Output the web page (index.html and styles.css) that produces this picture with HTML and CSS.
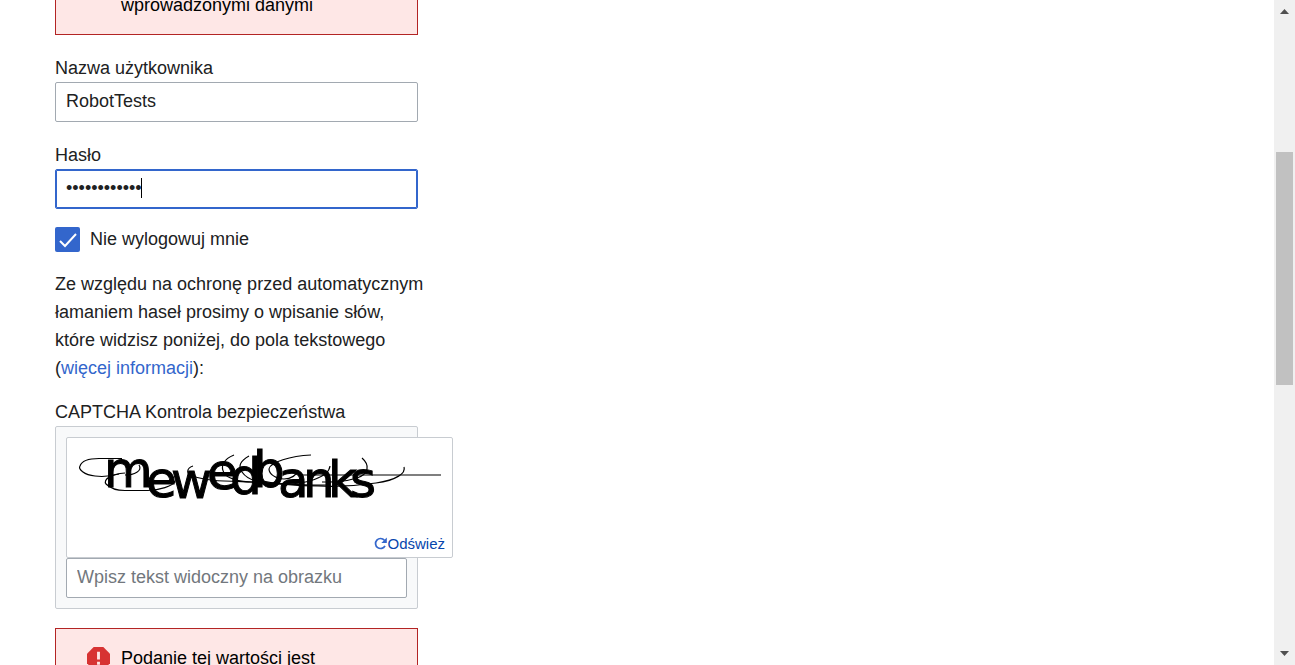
FILE: index.html
```
<!DOCTYPE html>
<html lang="pl">
<head>
<meta charset="utf-8">
<meta name="viewport" content="width=device-width, initial-scale=1">
<title>Zaloguj się</title>
<link rel="stylesheet" href="styles.css">
</head>
<body>
<div class="page">
  <main class="content">
    <form class="login">
      <div class="alert alert-top"><p class="alert-text">wprowadzonymi danymi</p></div>

      <div class="field">
        <label class="label" for="username">Nazwa użytkownika</label>
        <input class="input" id="username" type="text" value="RobotTests">
      </div>

      <div class="field">
        <label class="label" for="password">Hasło</label>
        <div class="password-wrap">
          <input class="input input-active" id="password" type="password" value="robottests12">
          <span class="caret"></span>
        </div>
      </div>

      <div class="remember">
        <input class="checkbox" id="remember" type="checkbox" checked>
        <label class="remember-label" for="remember">Nie wylogowuj mnie</label>
      </div>

      <p class="notice">Ze względu na ochronę przed automatycznym łamaniem haseł prosimy o wpisanie słów, które widzisz poniżej, do pola tekstowego (<a class="link" href="#">więcej informacji</a>):</p>

      <div class="captcha-field">
        <label class="label" for="captcha">CAPTCHA Kontrola bezpieczeństwa</label>
        <div class="captcha">
          <div class="captcha-image">
            <svg class="captcha-picture" viewBox="67 438 385 95" role="img" aria-label="CAPTCHA">
              <text class="captcha-word" x="104 146 171 207 230 253 278 303 328 350" y="487 497 498 489 494 487 497 497 497 497">mewedbanks</text>
              <g class="captcha-lines">
                <path d="M139 465C143 471 134 475 125 475M119 474C108 477 102 477 95 476C84 475 78 469 80 466C82 460 92 458.500 99 458.500H122"/>
                <path d="M125 473C110 474 103 480 106 484C110 488 118 490.500 125 490.500H148C160 490 172 486 175 482L172 479"/>
                <path d="M193 466C187 468 185 474 193 476C206 481 222 481 250 482C280 483 305 486 330 485"/>
                <path d="M234 455C224 459 220 466 224 473C227 478 238 482 254 482"/>
                <path d="M249 456C240 461 238 466 242 472C248 481 262 484 280 484C306 485 329 477 330 466"/>
                <path d="M311 455C291 456 270 462 269 469C269 474 276 479 284 479C291 479 297 475 298 470"/>
                <path d="M362 458C370 465 369 474 357 478C344 482 334 482 322 482"/>
                <path d="M404 467C406 473 397 480 376 483C356 486 340 487 318 486C295 486 275 484 258 480"/>
                <path d="M298 475H441"/>
              </g>
            </svg>
            <a class="refresh" href="#">
              <svg class="refresh-icon" viewBox="0 0 13 13" aria-hidden="true"><path d="M10.4 3.3A5 5 0 1 0 11 8.800"/><path class="refresh-tip" d="M12.8.6V6H7.3z"/></svg>
              <span>Odśwież</span>
            </a>
          </div>
          <input class="input" id="captcha" type="text" placeholder="Wpisz tekst widoczny na obrazku">
        </div>
      </div>

      <div class="alert">
        <svg class="alert-icon" viewBox="0 0 24 24" aria-hidden="true"><path fill="#d73333" d="M7 0h10l7 7v10l-7 7H7l-7-7V7z"/><path fill="#fee7e6" d="M10.500 5h3v8h-3zM10.500 15.500h3v3h-3z"/></svg>
        <p class="alert-text">Podanie tej wartości jest</p>
      </div>
    </form>
  </main>
  <div class="scrollbar" aria-hidden="true">
    <svg class="arrow" viewBox="0 0 9 5"><path d="M0 5L4.500 0L9 5z"/></svg>
    <div class="track"><div class="thumb"></div></div>
    <svg class="arrow" viewBox="0 0 9 5"><path d="M0 0L4.500 5L9 0z"/></svg>
  </div>
</div>
</body>
</html>
```
FILE: styles.css
```
* { box-sizing: border-box; }

body {
  margin: 0;
  background: #fff;
  color: #202122;
  font: 18px/28px "Liberation Sans", Arial, sans-serif;
}

p { margin: 0; }

.page {
  display: flex;
  height: 100vh;
  overflow: hidden;
}

.content {
  flex: 1;
  min-width: 0;
  padding-left: 55px;
  overflow: hidden;
}

.login { max-width: 363px; }

.alert {
  display: flex;
  gap: 11px;
  margin-top: 19px;
  padding: 15px 31px;
  border: 1px solid #b32424;
  background: #fee7e6;
  color: #000;
}

.alert-top {
  margin-top: -25px;
  padding-left: 65px;
}

.alert-icon {
  flex: none;
  width: 23px;
  height: 23px;
  margin-top: 3px;
}

.field { margin-top: 19px; }
.label { display: block; }

.input {
  display: block;
  width: 100%;
  height: 40px;
  padding: 0 10px 1px;
  border: 1px solid #a2a9b1;
  border-radius: 2px;
  background: #fff;
  color: #202122;
  font: inherit;
  outline: 0;
}

.input::placeholder { color: #72777d; opacity: 1; }

.input-active {
  border-color: #36c;
  box-shadow: inset 0 0 0 1px #36c;
}

.password-wrap { position: relative; }

.caret {
  position: absolute;
  top: 9px;
  left: 86px;
  width: 1px;
  height: 20px;
  background: #000;
}

.remember {
  display: flex;
  align-items: center;
  gap: 10px;
  height: 25px;
  margin-top: 18px;
}

.remember-label { padding-bottom: 2px; }

.checkbox {
  flex: none;
  appearance: none;
  width: 25px;
  height: 25px;
  margin: 0;
  border-radius: 2px;
  background: #36c url("data:image/svg+xml,%3Csvg xmlns='http://www.w3.org/2000/svg' viewBox='0 0 25 25'%3E%3Cpath d='M5 14l5 5L21 7' fill='none' stroke='white' stroke-width='2'/%3E%3C/svg%3E") center / contain no-repeat;
}

.notice {
  margin-top: 18px;
  margin-right: -8px;
}

.link { color: #36c; text-decoration: none; }

.captcha-field { margin-top: 16px; }

.captcha {
  padding: 10px;
  border: 1px solid #c8ccd1;
  border-radius: 2px;
  background: #f8f9fa;
}

.captcha-image {
  display: flex;
  flex-direction: column;
  width: 387px;
  border: 1px solid #c8ccd1;
  border-radius: 2px;
  background: #fff;
}

.captcha-picture { display: block; width: 100%; }
.captcha-word { font: 50px "DejaVu Sans", sans-serif; fill: #000; stroke: #000; stroke-width: 1; }
.captcha-lines { fill: none; stroke: #000; stroke-width: 1.2; }

.refresh {
  display: flex;
  align-items: center;
  align-self: flex-end;
  height: 24px;
  padding-right: 7px;
  padding-bottom: 3px;
  color: #0645ad;
  font-size: 15px;
  line-height: 20px;
  text-decoration: none;
}

.refresh-icon { width: 13px; height: 13px; fill: none; stroke: #36c; stroke-width: 1.7; }
.refresh-tip { fill: #36c; stroke: none; }

.scrollbar {
  display: flex;
  flex: none;
  flex-direction: column;
  align-items: center;
  width: 21px;
  padding: 9px 0;
  background: #f0f0f0;
}

.arrow { flex: none; width: 9px; height: 5px; fill: #505050; }

.track {
  display: flex;
  flex: 1;
  flex-direction: column;
  width: 17px;
}

.track::before { content: ""; flex: 138; }
.thumb { flex: 233; background: #c1c1c1; }
.track::after { content: ""; flex: 266; }
```
